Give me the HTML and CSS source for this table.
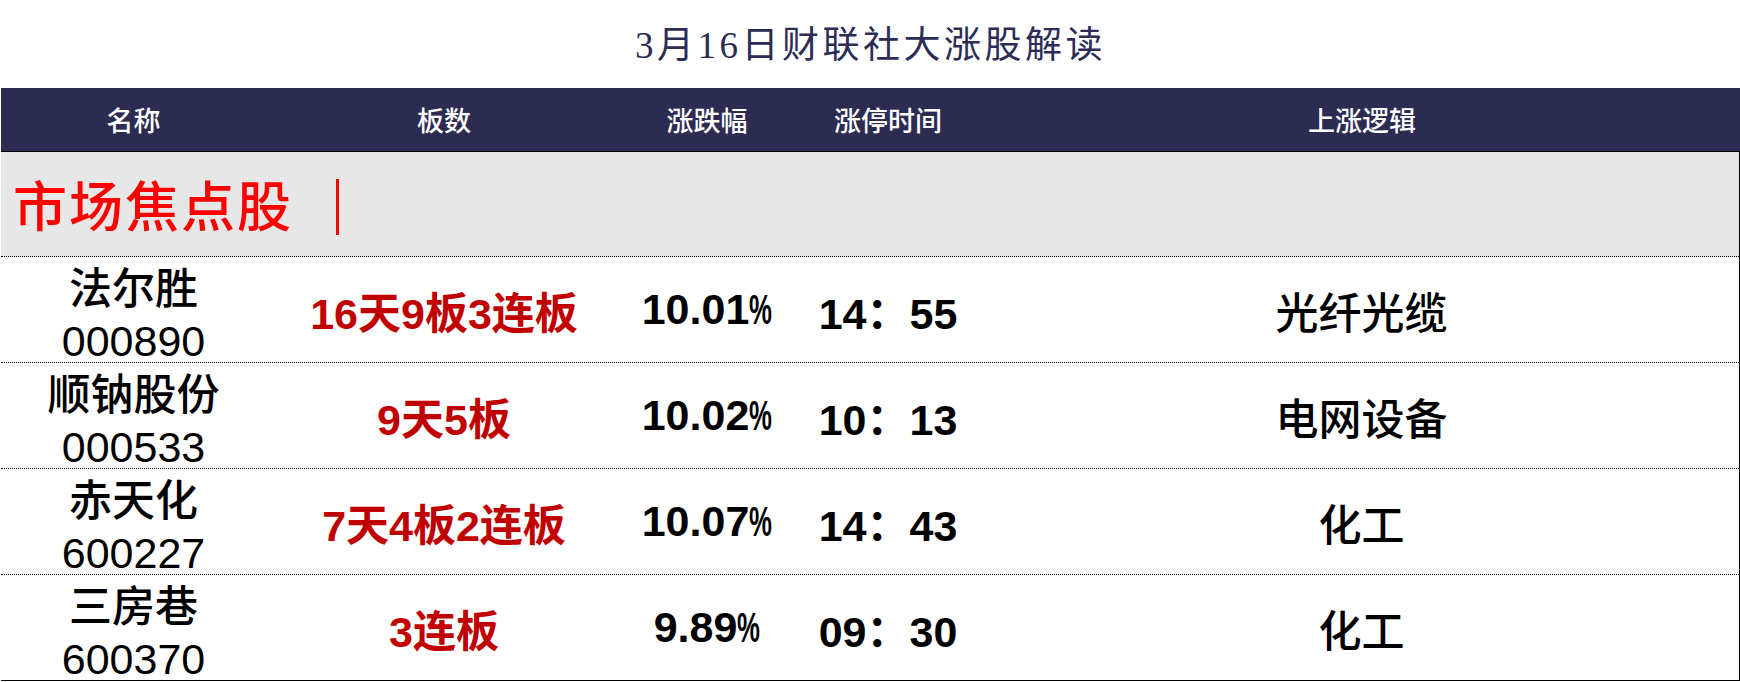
FILE: index.html
```html
<!DOCTYPE html>
<html lang="zh-CN">
<head>
<meta charset="utf-8">
<title>3月16日财联社大涨股解读</title>
<link rel="stylesheet" href="styles.css">
</head>
<body>
<div class="page">
  <h1 class="title">3月16日财联社大涨股解读</h1>
  <div class="table">
    <div class="head grid">
      <div class="cell">名称</div>
      <div class="cell">板数</div>
      <div class="cell">涨跌幅</div>
      <div class="cell">涨停时间</div>
      <div class="cell">上涨逻辑</div>
    </div>
    <div class="body">
      <div class="section"><span class="section-text">市场焦点股</span><span class="section-bar"></span></div>
      <div class="row grid">
        <div class="cell name"><div><div class="cn">法尔胜</div><div class="code">000890</div></div></div>
        <div class="cell board">16天9板3连板</div>
        <div class="cell num">10.01<span class="pct">%</span></div>
        <div class="cell num">14：55</div>
        <div class="cell logic">光纤光缆</div>
      </div>
      <div class="row grid">
        <div class="cell name"><div><div class="cn">顺钠股份</div><div class="code">000533</div></div></div>
        <div class="cell board">9天5板</div>
        <div class="cell num">10.02<span class="pct">%</span></div>
        <div class="cell num">10：13</div>
        <div class="cell logic">电网设备</div>
      </div>
      <div class="row grid">
        <div class="cell name"><div><div class="cn">赤天化</div><div class="code">600227</div></div></div>
        <div class="cell board">7天4板2连板</div>
        <div class="cell num">10.07<span class="pct">%</span></div>
        <div class="cell num">14：43</div>
        <div class="cell logic">化工</div>
      </div>
      <div class="row grid last">
        <div class="cell name"><div><div class="cn">三房巷</div><div class="code">600370</div></div></div>
        <div class="cell board">3连板</div>
        <div class="cell num">9.89<span class="pct">%</span></div>
        <div class="cell num">09：30</div>
        <div class="cell logic">化工</div>
      </div>
    </div>
  </div>
</div>
</body>
</html>
```

FILE: styles.css
```css
* { box-sizing: border-box; }
html, body { margin: 0; padding: 0; background: #ffffff; }
body {
  width: 1740px;
  height: 682px;
  overflow: hidden;
  font-family: "Liberation Sans", "Noto Sans CJK SC", sans-serif;
}
.page { padding-left: 1px; }
.title {
  margin: 0;
  height: 88px;
  display: flex;
  align-items: center;
  justify-content: center;
  font-family: "Liberation Serif", "Noto Sans CJK SC", serif;
  font-weight: 400;
  font-size: 37px;
  letter-spacing: 3.5px;
  color: #2d2c55;
  padding-bottom: 4px;
}
.grid {
  display: grid;
  grid-template-columns: 265px 356px 170px 192px 1fr;
}
.cell {
  display: flex;
  align-items: center;
  justify-content: center;
  text-align: center;
}
.head {
  height: 64px;
  background: #2c2b52;
  border-bottom: 1px solid #000;
  color: #ffffff;
  font-family: "Noto Sans CJK SC", sans-serif;
  font-weight: 500;
  font-size: 27px;
}
.body { border-right: 1px solid #000; }
.section {
  height: 105px;
  background: #e7e7e7;
  border-bottom: 1px dotted #000;
  display: flex;
  align-items: center;
  padding-left: 12px;
  color: #ff0000;
}
.section-text {
  font-family: "Noto Sans CJK SC", serif;
  font-weight: 500;
  font-size: 54px;
  letter-spacing: 2px;
  line-height: 1;
}
.section-bar {
  width: 3px;
  height: 56px;
  background: #ff0000;
  margin-left: 43px;
  margin-top: 6px;
}
.row {
  height: 106px;
  border-bottom: 1px dotted #000;
  color: #000;
}
.row.last { border-bottom: 1px solid #000; }
.name {
  font-size: 43px;
  align-items: flex-start;
  padding-top: 9px;
}
.cn {
  font-weight: 500;
  white-space: nowrap;
  line-height: 52px;
  margin-top: -3px;
}
.code {
  white-space: nowrap;
  line-height: 40px;
  margin-top: 6px;
}
.board {
  color: #c00000;
  font-weight: 700;
  font-size: 43px;
}
.num {
  font-weight: 700;
  font-size: 43px;
}
.pct {
  display: inline-block;
  width: 23px;
  transform: scaleX(0.6);
  transform-origin: left center;
}
.logic {
  font-size: 43px;
  font-weight: 500;
  font-family: "Noto Sans CJK SC", sans-serif;
}
```
